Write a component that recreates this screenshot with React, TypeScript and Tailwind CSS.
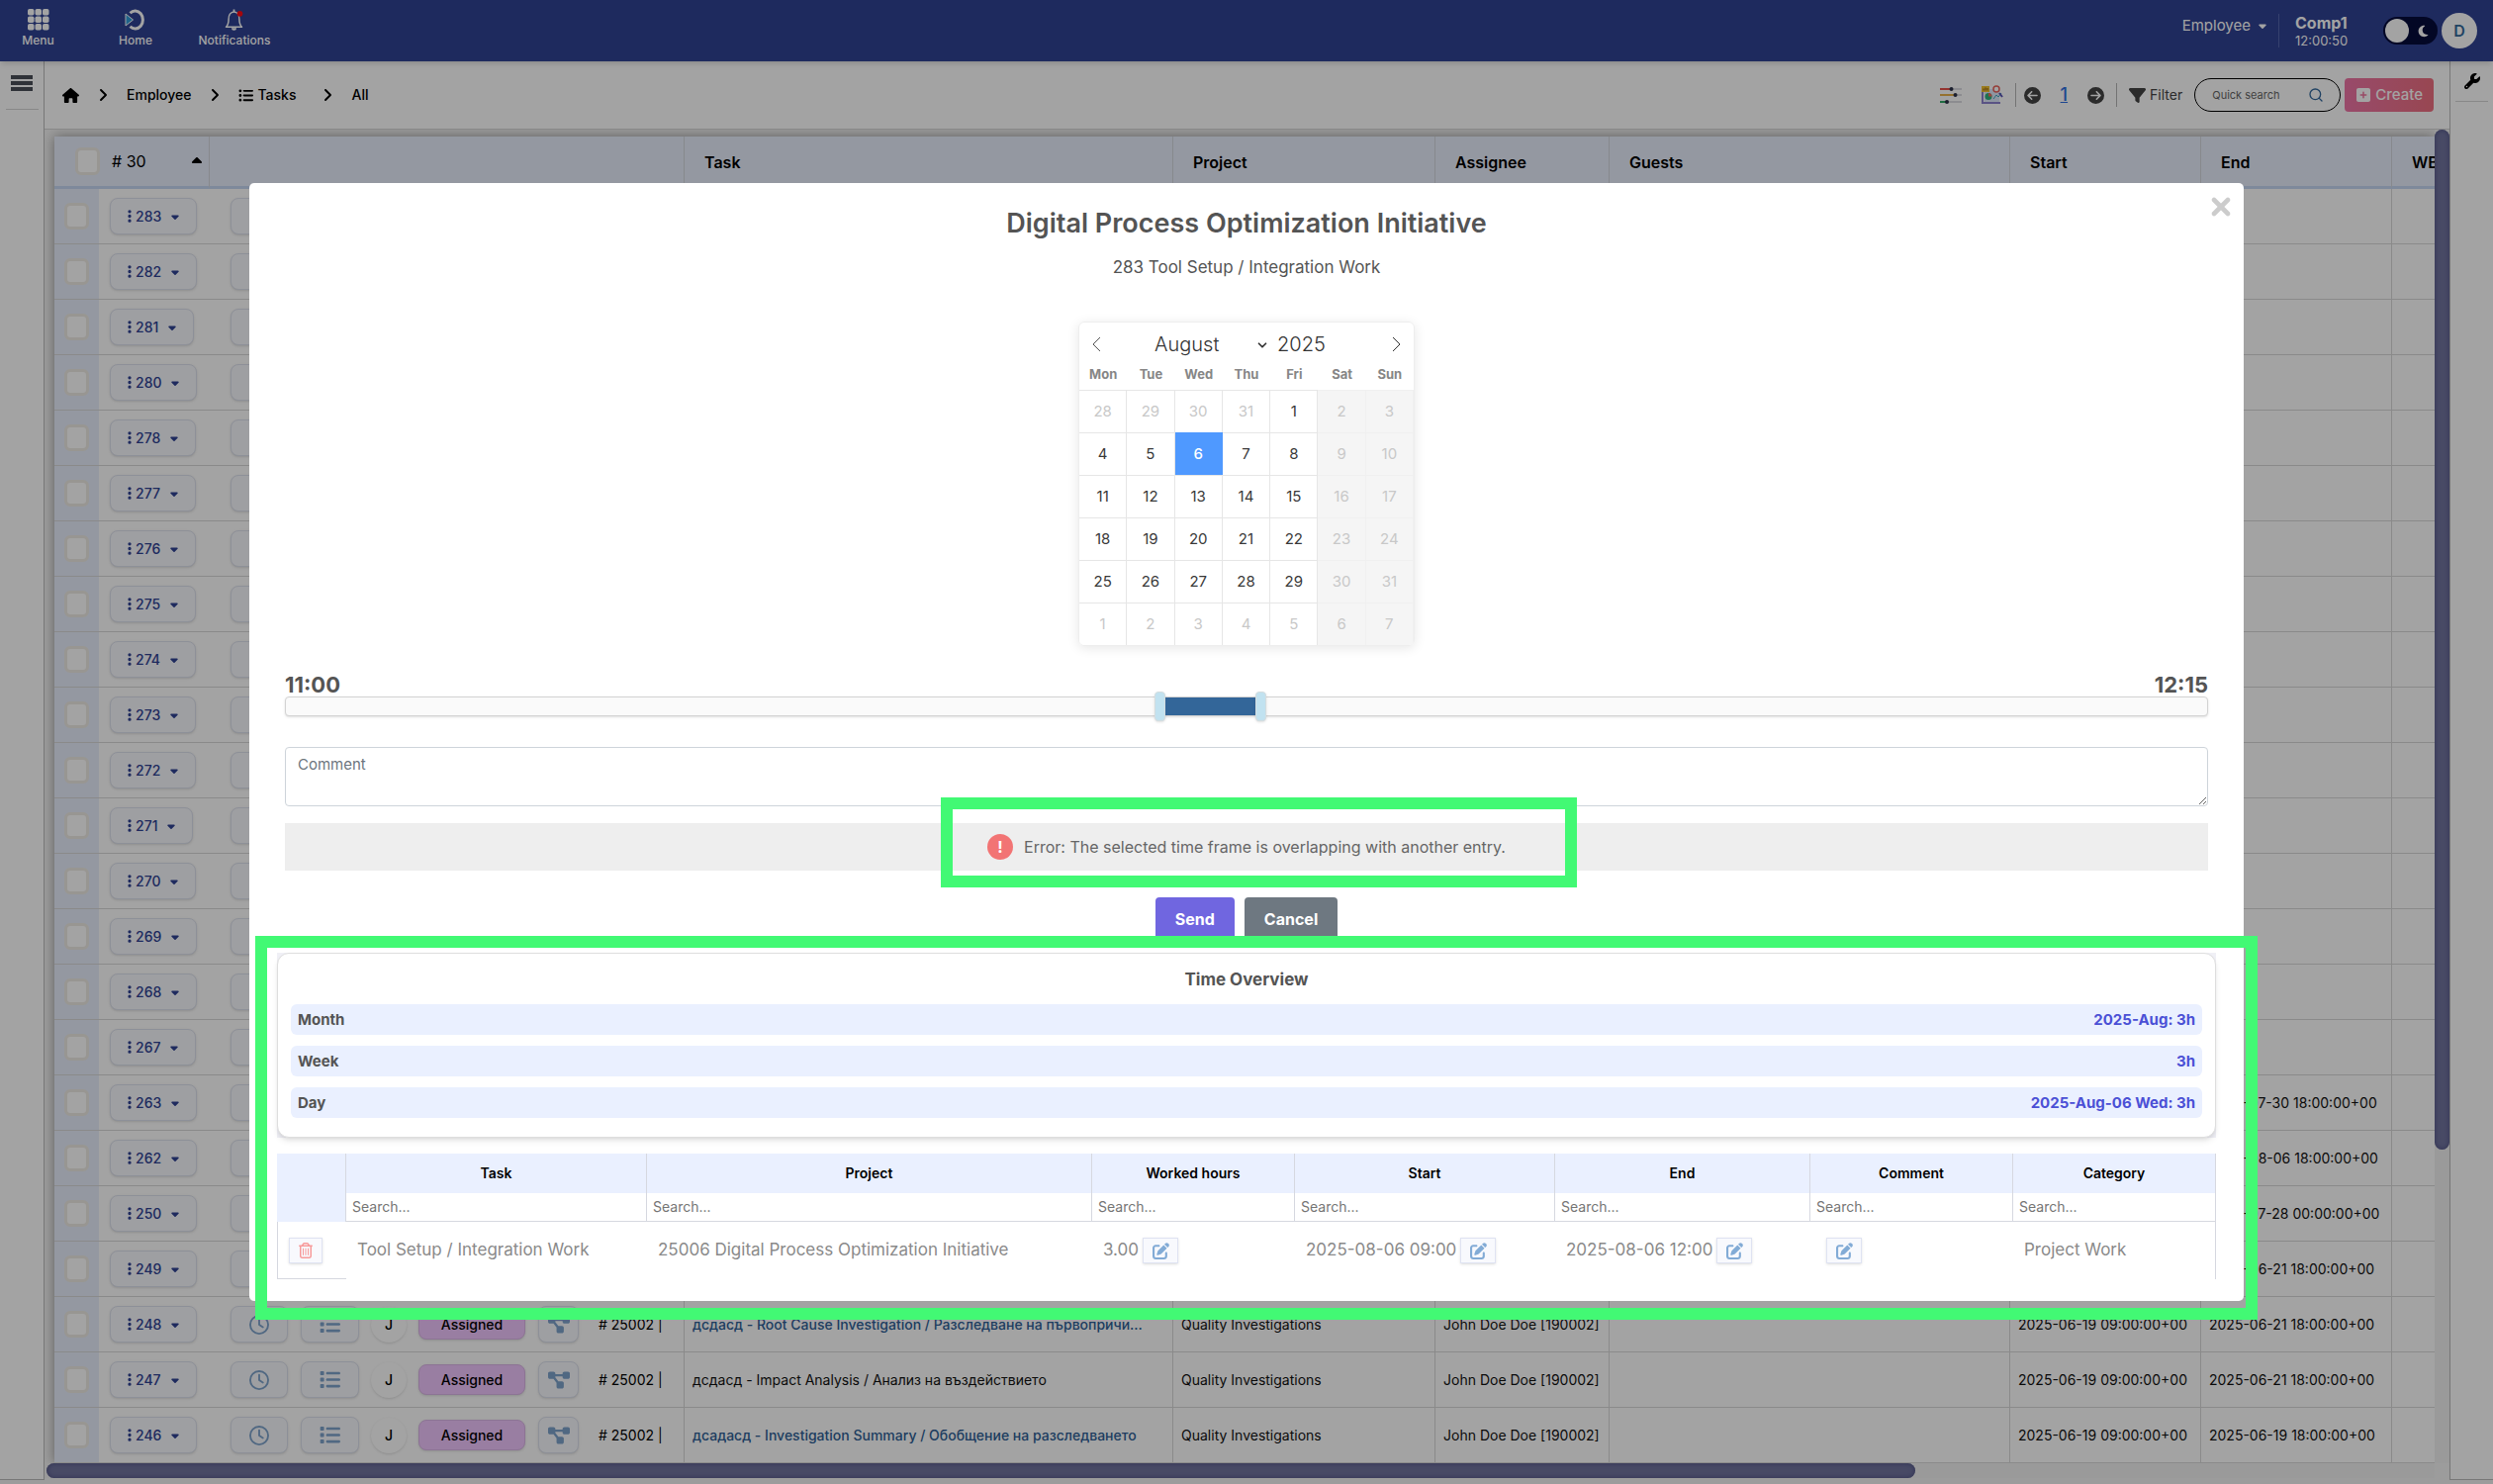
import { useState } from "react";
import {
  FaAngleRight,
  FaCaretDown,
  FaCaretUp,
  FaCircleArrowLeft,
  FaCircleArrowRight,
  FaDiagramProject,
  FaEllipsisVertical,
  FaFilter,
  FaHouse,
  FaList,
  FaListUl,
  FaMoon,
  FaPenToSquare,
  FaRegClock,
  FaRegTrashCan,
  FaSquarePlus,
  FaWrench,
} from "react-icons/fa6";
import { ChevronDown, Search, X } from "lucide-react";

type TaskRow = {
  id: number;
  end?: string;
  start?: string;
  task?: string;
  link?: boolean;
};

const rows: TaskRow[] = [
  { id: 283 },
  { id: 282 },
  { id: 281 },
  { id: 280 },
  { id: 278 },
  { id: 277 },
  { id: 276 },
  { id: 275 },
  { id: 274 },
  { id: 273 },
  { id: 272 },
  { id: 271 },
  { id: 270 },
  { id: 269 },
  { id: 268 },
  { id: 267 },
  { id: 263, end: "2025-07-30 18:00:00+00" },
  { id: 262, end: "2025-08-06 18:00:00+00" },
  { id: 250, end: "2025-07-28 00:00:00+00" },
  { id: 249, end: "2025-06-21 18:00:00+00" },
  {
    id: 248,
    task: "дсдасд - Root Cause Investigation / Разследване на първопричи...",
    link: true,
    start: "2025-06-19 09:00:00+00",
    end: "2025-06-21 18:00:00+00",
  },
  {
    id: 247,
    task: "дсдасд - Impact Analysis / Анализ на въздействието",
    start: "2025-06-19 09:00:00+00",
    end: "2025-06-21 18:00:00+00",
  },
  {
    id: 246,
    task: "дсадасд - Investigation Summary / Обобщение на разследването",
    link: true,
    start: "2025-06-19 09:00:00+00",
    end: "2025-06-19 18:00:00+00",
  },
];

const weekdays = ["Mon", "Tue", "Wed", "Thu", "Fri", "Sat", "Sun"];

const months = [
  "January",
  "February",
  "March",
  "April",
  "May",
  "June",
  "July",
  "August",
  "September",
  "October",
  "November",
  "December",
];

// 28 Jul 2025 is the first visible day
const days = Array.from({ length: 42 }, (_, i) => {
  const date = new Date(2025, 6, 28 + i);

  return {
    key: i,
    day: date.getDate(),
    current: date.getMonth() === 7,
    weekend: i % 7 > 4,
  };
});

const overview = [
  { label: "Month", value: "2025-Aug: 3h" },
  { label: "Week", value: "3h" },
  { label: "Day", value: "2025-Aug-06 Wed: 3h" },
];

const entryColumns = [
  "Task",
  "Project",
  "Worked hours",
  "Start",
  "End",
  "Comment",
  "Category",
];

function HomeLogo() {
  return (
    <svg width="22" height="22" viewBox="0 0 22 22" fill="none">
      <path
        d="M5.500 4.200A7.800 9 0 1 1 5.500 17.800"
        stroke="white"
        strokeWidth="3"
      />
      <path d="M1 5 8.5 11 1 17Z" fill="#2f9bd8" stroke="white" />
    </svg>
  );
}

function Bell() {
  return (
    <svg width="22" height="22" viewBox="0 0 22 22" fill="none">
      <path
        d="M2.5 18.3c2.2-2 2.6-4 2.6-7.8C5.100 6.500 7 3 10.500 3s5.400 3.500 5.400 7.500c0 3.800.4 5.800 2.600 7.800Z"
        stroke="white"
        strokeWidth="1.5"
        strokeLinejoin="round"
      />
      <path d="M10.500 0.500v2.500" stroke="white" strokeWidth="1.800" />
      <path d="M8 19.300a2.500 2.500 0 0 0 5 0Z" fill="white" />
      <circle cx="16.500" cy="4.800" r="2.900" fill="#ff0a14" />
    </svg>
  );
}

function MenuGrid() {
  return (
    <svg width="22" height="22" viewBox="0 0 22 22" fill="white">
      {[0, 7.5, 15].map((y) =>
        [0, 7.5, 15].map((x) => (
          <rect key={`${x}-${y}`} x={x} y={y} width="6.500" height="6.500" rx="1.800" />
        )),
      )}
    </svg>
  );
}

function Bars() {
  return (
    <svg width="22" height="16" viewBox="0 0 22 16" fill="#4a4f58">
      <path d="M0 0h22v4H0zM0 6h22v4H0zM0 12h22v4H0z" />
    </svg>
  );
}

function SlidersIcon() {
  return (
    <svg width="22" height="20" viewBox="0 0 22 20">
      <path d="M0 4h22M0 10h22M0 17h22" stroke="#b9b9c6" strokeWidth="1.200" />
      <path d="M0 4h11" stroke="#e8504a" strokeWidth="2" />
      <path d="M0 10h15" stroke="#eab14a" strokeWidth="2" />
      <path d="M0 17h6" stroke="#2fa866" strokeWidth="2" />
      <circle cx="11.500" cy="4" r="2" fill="#2c3148" />
      <circle cx="15.500" cy="10" r="2" fill="#2c3148" />
      <circle cx="7" cy="17" r="2" fill="#2c3148" />
    </svg>
  );
}

function ReportIcon() {
  return (
    <svg width="22" height="20" viewBox="0 0 22 20">
      <path d="M3 4h15v13H3z" fill="#dfe9fb" />
      <path d="M1 6v12h18" stroke="#8d83cf" strokeWidth="2" fill="none" />
      <path d="M0 1h8v6H0z" fill="#f2c230" />
      <path d="M2 5.500V3.500M4 5.500V2.500M6 5.500V3" stroke="#8a5a14" />
      <circle cx="15" cy="4" r="3" fill="#fff" stroke="#e8635c" strokeWidth="1.500" />
      <circle cx="7" cy="11.500" r="3.500" fill="#2fb37c" />
      <path d="M7 11.500V8A3.500 3.500 0 0 1 10.500 11.500Z" fill="#ef6a5e" />
      <path d="m12 14 3-4 2 2 3-4" stroke="#3fa8c0" fill="none" />
      <path d="m18 8 3 4" stroke="#5a55b5" strokeWidth="2" />
    </svg>
  );
}

function TopBar() {
  return (
    <header className="relative flex h-[62px] shrink-0 items-center justify-between bg-[#2f4294] pr-4 text-white shadow-md">
      <nav className="mb-1 flex text-xs font-medium">
        <a href="#menu" className="flex w-[77px] flex-col items-center gap-0.5">
          <MenuGrid />
          Menu
        </a>
        <a
          href="#home"
          className="ml-5 flex w-20 flex-col items-center gap-0.5"
        >
          <HomeLogo />
          Home
        </a>
        <a
          href="#notifications"
          className="ml-5 flex w-20 flex-col items-center gap-0.5"
        >
          <Bell />
          Notifications
        </a>
      </nav>

      <div className="flex items-center">
        <button
          type="button"
          className="mb-2.5 flex items-center gap-1.5 text-[15px]"
        >
          Employee
          <FaCaretDown className="size-3" />
        </button>
        <div className="ml-2.5 h-[34px] w-px bg-[#5566ad]" />
        <div className="ml-4 flex w-[89px] flex-col">
          <span className="text-base leading-5 font-bold">Comp1</span>
          <span className="text-[13px] leading-4">12:00:50</span>
        </div>
        <button
          type="button"
          aria-label="Dark mode"
          className="flex h-7 w-[55px] items-center justify-between rounded-full bg-[#060b3a] pr-2 pl-0.5"
        >
          <span className="size-6 rounded-full bg-white" />
          <FaMoon className="size-[13px]" />
        </button>
        <span className="ml-1 flex size-9 items-center justify-center rounded-full bg-white font-semibold text-[#336a9c]">
          D
        </span>
      </div>
    </header>
  );
}

function Toolbar() {
  return (
    <div className="flex h-[69px] items-center justify-between border-b border-[#d5d5d5] bg-white pr-4 pl-[18px]">
      <nav className="flex items-center text-sm font-medium text-black">
        <a href="#home" aria-label="Home">
          <FaHouse className="size-[17px]" />
        </a>
        <FaAngleRight className="mx-4 size-4" />
        <a href="#employee">Employee</a>
        <FaAngleRight className="mx-4 size-4" />
        <a href="#tasks" className="flex items-center gap-1">
          <FaListUl className="size-[15px]" />
          Tasks
        </a>
        <FaAngleRight className="mr-4 ml-6 size-4" />
        <a href="#all">All</a>
      </nav>

      <div className="flex items-center text-[#444]">
        <SlidersIcon />
        <span className="ml-5">
          <ReportIcon />
        </span>
        <span className="ml-3 h-6 w-px bg-[#b5b5b5]" />
        <button type="button" aria-label="Previous page" className="ml-2">
          <FaCircleArrowLeft className="size-[17px]" />
        </button>
        <a
          href="#page-1"
          className="mx-5 text-lg font-medium text-[#2f6fe0] underline"
        >
          1
        </a>
        <button type="button" aria-label="Next page">
          <FaCircleArrowRight className="size-[17px]" />
        </button>
        <span className="ml-3 h-6 w-px bg-[#b5b5b5]" />
        <button
          type="button"
          className="ml-3 flex items-center gap-1 text-sm"
        >
          <FaFilter className="size-[17px]" />
          Filter
        </button>
        <div className="ml-3 flex h-[34px] w-[148px] items-center rounded-full border border-black pr-4 pl-[17px]">
          <input
            type="search"
            aria-label="Quick search"
            placeholder="Quick search"
            className="w-full min-w-0 text-[11px] outline-none placeholder:text-[#666]"
          />
          <Search className="size-4 shrink-0 text-[#33689c]" />
        </div>
        <button
          type="button"
          className="ml-1 flex h-[34px] items-center gap-1 rounded bg-linear-to-r from-[#ee75a6] to-[#ee6f80] px-[11px] text-[15px] font-medium text-white"
        >
          <FaSquarePlus className="size-4" />
          Create
        </button>
      </div>
    </div>
  );
}

const iconButton =
  "flex h-[37px] items-center justify-center rounded-lg border border-[#dde1ee] bg-[#f8f9fd] text-[#7ea3cc] shadow-sm";

function RowActions({ full }: { full: boolean }) {
  return (
    <div className="flex items-center pl-[21px] text-black">
      <button
        type="button"
        aria-label="Track time"
        className={`${iconButton} w-[58px]`}
      >
        <FaRegClock className="size-5" />
      </button>
      {full && (
        <>
          <button
            type="button"
            aria-label="Checklist"
            className={`${iconButton} ml-[13px] w-[59px]`}
          >
            <FaList className="size-[21px]" />
          </button>
          <span className="ml-3 flex size-9 items-center justify-center rounded-full bg-white font-medium shadow">
            J
          </span>
          <span className="ml-3 flex h-[31px] w-[108px] items-center justify-center rounded-lg border border-[#dcb6e8] bg-[#f0c5fd] font-medium shadow">
            Assigned
          </span>
          <button
            type="button"
            aria-label="Workflow"
            className={`${iconButton} ml-[13px] w-[41px]`}
          >
            <FaDiagramProject className="size-[22px]" />
          </button>
          <span className="ml-5"># 25002 |</span>
        </>
      )}
    </div>
  );
}

const headCell = "border-r border-[#d3d6dd] pt-0.5 pl-5 text-base font-semibold";
const bodyCell = "border-r border-b border-[#d8d8d8] pl-2";

function TaskTable() {
  return (
    <table className="w-full table-fixed border-separate border-spacing-0 text-left text-sm whitespace-nowrap text-[#111]">
      <colgroup>
        <col className="w-[45px]" />
        <col className="w-[112px]" />
        <col className="w-[480px]" />
        <col className="w-[494px]" />
        <col className="w-[265px]" />
        <col className="w-[176px]" />
        <col />
        <col className="w-[193px]" />
        <col className="w-[193px]" />
        <col className="w-[43px]" />
      </colgroup>
      <thead>
        <tr className="h-[53px] bg-[#e8eefc] text-black [&>th]:border-b-3 [&>th]:border-b-[#c5d6f3]">
          <th colSpan={2} className="border-r border-[#d3d6dd] font-normal">
            <div className="flex items-center pr-1 pl-[21px] text-base">
              <input
                type="checkbox"
                aria-label="Select all tasks"
                className="h-7 w-[25px] appearance-none rounded-md border-3 border-[#eeebe4] bg-white"
              />
              <span className="ml-3"># 30</span>
              <FaCaretUp className="ml-auto size-4" />
            </div>
          </th>
          <th className={headCell} />
          <th className={headCell}>Task</th>
          <th className={headCell}>Project</th>
          <th className={headCell}>Assignee</th>
          <th className={headCell}>Guests</th>
          <th className={headCell}>Start</th>
          <th className={headCell}>End</th>
          <th className="overflow-hidden pt-0.5 pl-5 text-base font-semibold">
            WBS
          </th>
        </tr>
      </thead>
      <tbody className="bg-white">
        {rows.map((row) => (
          <tr key={row.id} className="h-14">
            <td className="border-b border-[#d8d8d8] bg-[#e8eefc] pl-[10px]">
              <input
                type="checkbox"
                aria-label={`Select task ${row.id}`}
                className="block h-[27px] w-[25px] appearance-none rounded-md border-3 border-[#eeebe4] bg-white"
              />
            </td>
            <td className="border-b border-[#d8d8d8] pl-[11px]">
              <button
                type="button"
                className="flex h-[37px] items-center rounded-lg border border-[#dde1ee] bg-[#f8f9fd] px-[15px] font-medium text-[#2f4294] shadow-sm"
              >
                <FaEllipsisVertical className="mr-0.5 h-[15px] w-2" />
                {row.id}
                <FaCaretDown className="ml-2 size-3" />
              </button>
            </td>
            <td className="border-r border-b border-[#d8d8d8]">
              <RowActions full={!!row.task} />
            </td>
            <td className={bodyCell}>
              {row.link ? (
                <a
                  href={`#task-${row.id}`}
                  className="font-medium text-[#2f5f96]"
                >
                  {row.task}
                </a>
              ) : (
                row.task
              )}
            </td>
            <td className={bodyCell}>{row.task && "Quality Investigations"}</td>
            <td className={bodyCell}>{row.task && "John Doe Doe [190002]"}</td>
            <td className={bodyCell} />
            <td className={bodyCell}>{row.start}</td>
            <td className={bodyCell}>{row.end}</td>
            <td className="border-b border-[#d8d8d8]" />
          </tr>
        ))}
      </tbody>
    </table>
  );
}

function Calendar() {
  const [selected, setSelected] = useState(9);

  return (
    <div className="mx-auto w-[340px] overflow-hidden rounded-md border border-[#eee] shadow-[0_2px_12px_rgba(0,0,0,0.1)]">
      <div className="flex h-[44px] items-center px-3 text-xl font-light text-[#333]">
        <button type="button" aria-label="Previous month">
          <svg width="10" height="14" viewBox="0 0 10 14" fill="none">
            <path d="M9 0 2 7l7 7" stroke="#555" />
          </svg>
        </button>
        <div className="mx-auto flex items-center">
          <div className="relative">
            <select
              aria-label="Month"
              defaultValue="August"
              className="w-[124px] appearance-none pl-1"
            >
              {months.map((month) => (
                <option key={month}>{month}</option>
              ))}
            </select>
            <ChevronDown
              strokeWidth={3}
              className="absolute top-2 right-1 size-3.5"
            />
          </div>
          <input
            aria-label="Year"
            defaultValue="2025"
            className="ml-1 w-[66px]"
          />
        </div>
        <button type="button" aria-label="Next month">
          <svg width="10" height="14" viewBox="0 0 10 14" fill="none">
            <path d="m1 0 7 7-7 7" stroke="#333" />
          </svg>
        </button>
      </div>
      <div className="grid h-6 grid-cols-7 text-center text-[13px] leading-4 font-bold text-[#868686]">
        {weekdays.map((weekday) => (
          <span key={weekday}>{weekday}</span>
        ))}
      </div>
      <div className="grid grid-cols-7 text-[15px]">
        {days.map(({ key, day, current, weekend }) => {
          let color = "text-[#c8c8c8]";
          if (current && !weekend) color = "text-[#393939]";

          let background = "border-[#e6e6e6] bg-white";
          if (weekend) background = "border-[#f0f0f0] bg-[#f5f5f5]";
          if (key === selected) {
            color = "text-white font-medium";
            background = "border-[#4f99ff] bg-[#4f99ff]";
          }

          return (
            <button
              key={key}
              type="button"
              onClick={() => setSelected(key)}
              className={`h-[43px] border-t border-r ${color} ${background}`}
            >
              {day}
            </button>
          );
        })}
      </div>
    </div>
  );
}

function EditButton({ label }: { label: string }) {
  return (
    <button
      type="button"
      aria-label={label}
      className="flex h-[26px] w-9 items-center justify-center border border-[#dfe3f2] bg-[#f8f9fd] text-[#82abd6] shadow-sm"
    >
      <FaPenToSquare className="size-[17px]" />
    </button>
  );
}

function TimeEntries() {
  return (
    <table className="mt-4 w-full table-fixed border-separate border-spacing-0 text-left text-[17px] text-[#8a8a8a]">
      <colgroup>
        <col className="w-[70px]" />
        <col className="w-[304px]" />
        <col className="w-[450px]" />
        <col className="w-[205px]" />
        <col className="w-[263px]" />
        <col className="w-[258px]" />
        <col className="w-[205px]" />
        <col />
      </colgroup>
      <thead>
        <tr className="h-10 bg-[#eaf0ff] text-center text-sm text-black">
          <th rowSpan={2} className="border-r border-[#d6d8e0]" />
          {entryColumns.map((column) => (
            <th key={column} className="border-r border-[#d6d8e0] font-semibold">
              {column}
            </th>
          ))}
        </tr>
        <tr className="h-[29px]">
          {entryColumns.map((column) => (
            <th
              key={column}
              className="border-r border-b border-[#d6d8e0] pr-2 pl-1.5 font-normal"
            >
              <input
                type="text"
                aria-label={`Search ${column}`}
                placeholder="Search..."
                className="block w-full text-sm outline-none placeholder:text-[#757575]"
              />
            </th>
          ))}
        </tr>
      </thead>
      <tbody>
        <tr className="h-[58px]">
          <td className="border-b border-l border-[#d6d8e0] pl-[11px]">
            <button
              type="button"
              aria-label="Delete entry"
              className="flex h-[26px] w-[34px] items-center justify-center border border-[#dfe3f2] bg-[#f8f9fd] text-[#f79a9a] shadow-sm"
            >
              <FaRegTrashCan className="size-4" />
            </button>
          </td>
          <td className="pl-[11px]">Tool Setup / Integration Work</td>
          <td className="pl-[11px]">
            25006 Digital Process Optimization Initiative
          </td>
          <td className="pl-[11px]">
            <div className="flex items-center gap-1">
              3.00
              <EditButton label="Edit worked hours" />
            </div>
          </td>
          <td className="pl-[11px]">
            <div className="flex items-center gap-1">
              2025-08-06 09:00
              <EditButton label="Edit start" />
            </div>
          </td>
          <td className="pl-[11px]">
            <div className="flex items-center gap-1">
              2025-08-06 12:00
              <EditButton label="Edit end" />
            </div>
          </td>
          <td className="pl-4">
            <EditButton label="Edit comment" />
          </td>
          <td className="border-r border-[#d6d8e0] pl-[11px]">Project Work</td>
        </tr>
      </tbody>
    </table>
  );
}

function TimeRange() {
  return (
    <div className="mt-[27px] text-[#545454]">
      <div className="flex justify-between text-[22px] leading-6 font-bold">
        <span>11:00</span>
        <span>12:15</span>
      </div>
      <div className="flex h-5 items-center rounded border border-[#d3d3d3] bg-[#fafafa] shadow-sm">
        <div className="ml-[45.2%] h-[30px] w-[11px] shrink-0 rounded-sm border border-[#d3dde0] bg-[#c1e2f0] shadow-sm" />
        <div className="h-[18px] w-[4.7%] bg-[#336699]" />
        <div className="h-[30px] w-[11px] shrink-0 rounded-sm border border-[#d3dde0] bg-[#c1e2f0] shadow-sm" />
      </div>
    </div>
  );
}

function TimeDialog() {
  return (
    <div className="fixed inset-0 flex items-center justify-center bg-black/36">
      <div
        role="dialog"
        aria-labelledby="dialog-title"
        className="relative w-4/5 rounded-[5px] bg-white px-7 pb-[22px]"
      >
        <button
          type="button"
          aria-label="Close"
          className="absolute top-2.5 right-[9px] text-[#ccc]"
        >
          <X strokeWidth={4} className="size-7" />
        </button>

        <div className="px-2">
          <h2
            id="dialog-title"
            className="pt-[23px] text-center text-[27px] leading-9 font-semibold text-[#545454]"
          >
            Digital Process Optimization Initiative
          </h2>
          <p className="mt-4 mb-[45px] text-center text-[17px] leading-5 text-[#545454]">
            283 Tool Setup / Integration Work
          </p>
          <Calendar />
          <TimeRange />
          <textarea
            aria-label="Comment"
            placeholder="Comment"
            className="mt-[31px] block h-[60px] w-full rounded border border-[#ced4da] px-3 py-1.5 text-[15px] outline-none placeholder:text-[#6c757d]"
          />
          <div className="relative mt-[17px] flex h-12 items-center justify-center gap-[11px] bg-[#eee] text-base text-[#666]">
            <span className="flex size-[26px] items-center justify-center rounded-full bg-[#f27474] font-bold text-white">
              !
            </span>
            Error: The selected time frame is overlapping with another entry.
            <div className="absolute -top-[26px] -bottom-[17px] left-[34.1%] w-[643px] border-12 border-[#42f974]" />
          </div>
          <div className="mt-[27px] flex justify-center gap-2.5 text-base font-bold text-white">
            <button type="button" className="h-11 rounded bg-[#7066e0] px-5">
              Send
            </button>
            <button type="button" className="h-11 rounded bg-[#6e7881] px-5">
              Cancel
            </button>
          </div>
        </div>

        <section className="relative mt-3 text-[#545454]">
          <div className="bg-[#f0f0f6]">
            <div className="rounded-xl border border-[#dedede] bg-white px-[13px] pt-3.5 pb-[19px] shadow-md">
              <h3 className="text-center text-[17px] leading-6 font-bold">
                Time Overview
              </h3>
              <dl className="mt-[13px] flex flex-col gap-[11px]">
                {overview.map(({ label, value }) => (
                  <div
                    key={label}
                    className="flex h-[31px] items-center justify-between rounded-md bg-[#eaf0ff] px-[7px] pt-0.5 text-[15px] font-bold"
                  >
                    <dt>{label}</dt>
                    <dd className="text-[#4b50d6]">{value}</dd>
                  </div>
                ))}
              </dl>
            </div>
          </div>
          <TimeEntries />
          <div className="pointer-events-none absolute -top-[17px] -right-[42px] -bottom-[41px] -left-[22px] border-12 border-[#42f974]" />
        </section>
      </div>
    </div>
  );
}

export default function App() {
  return (
    <div className="flex min-h-screen flex-col bg-[#f4f4f4] font-[Inter,'Noto_Sans',sans-serif]">
      <TopBar />
      <div className="flex flex-1 pb-1">
        <aside className="flex w-[45px] shrink-0 flex-col items-center border-r border-b border-[#bbb] bg-white pt-3.5">
          <button type="button" aria-label="Toggle sidebar" className="h-4">
            <Bars />
          </button>
          <div className="mt-[18px] h-px w-[33px] bg-[#d5d5d5]" />
        </aside>

        <main className="min-w-0 flex-1">
          <Toolbar />
          <div className="flex">
            <div className="min-w-0 flex-1 overflow-hidden pt-[7px] pl-[10px]">
              <div className="shadow-[0_0_12px_rgba(0,0,0,0.4)]">
                <TaskTable />
              </div>
            </div>
            <div className="w-[15px] shrink-0 bg-[#f1f1f1]">
              <div className="h-[76.5%] rounded-full bg-[#71749f] shadow-[inset_0_0_5px_#4b4e80]" />
            </div>
          </div>
          <div className="mr-[15px] h-[15px] bg-[#f1f1f1]">
            <div className="ml-0.5 h-full w-[78.2%] rounded-full bg-[#71749f] shadow-[inset_0_0_5px_#4b4e80]" />
          </div>
        </main>

        <aside className="flex w-[44px] shrink-0 flex-col items-center border-b border-l border-[#bbb] bg-white pt-3 text-black">
          <button type="button" aria-label="Settings">
            <FaWrench className="size-4" />
          </button>
          <div className="mt-3 h-px w-[33px] bg-[#d5d5d5]" />
        </aside>
      </div>
      <TimeDialog />
    </div>
  );
}
